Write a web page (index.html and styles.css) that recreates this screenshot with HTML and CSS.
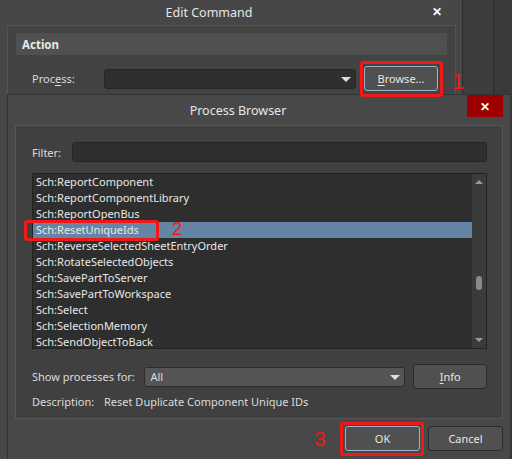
FILE: index.html
```html
<!DOCTYPE html>
<html>
<head>
  <title>Edit Command</title>
  <link rel="stylesheet" href="styles.css">
</head>
<body>
  <div class="desk">
    <!-- back window -->
    <div class="win edit-win">
      <div class="titlebar">
        <span class="title">Edit Command</span>
        <span class="close-plain">&#x2715;</span>
      </div>
      <div class="panel">
        <div class="section-head">Action</div>
        <div class="field-row">
          <span class="label">Proc<u>e</u>ss:</span>
          <div class="combo wide"><span class="caret"></span></div>
          <button class="btn focused"><u>B</u>rowse...</button>
        </div>
      </div>
    </div>
    <div class="side-strip"></div>

    <!-- front window -->
    <div class="win browser-win">
      <div class="titlebar">
        <span class="title">Process Browser</span>
        <span class="close-red">&#x2715;</span>
      </div>
      <div class="inner">
        <div class="filter-row">
          <span class="label">Filter:</span>
          <div class="input"></div>
        </div>
        <div class="list">
          <div class="items">
            <div class="item">Sch:ReportComponent</div>
            <div class="item">Sch:ReportComponentLibrary</div>
            <div class="item">Sch:ReportOpenBus</div>
            <div class="item selected">Sch:ResetUniqueIds</div>
            <div class="item">Sch:ReverseSelectedSheetEntryOrder</div>
            <div class="item">Sch:RotateSelectedObjects</div>
            <div class="item">Sch:SavePartToServer</div>
            <div class="item">Sch:SavePartToWorkspace</div>
            <div class="item">Sch:Select</div>
            <div class="item">Sch:SelectionMemory</div>
            <div class="item">Sch:SendObjectToBack</div>
          </div>
          <div class="scrollbar">
            <span class="arrow up"></span>
            <span class="thumb"></span>
            <span class="arrow down"></span>
          </div>
        </div>
        <div class="show-row">
          <span class="label">Show processes for:</span>
          <div class="combo all">All<span class="caret"></span></div>
          <button class="btn info"><u>I</u>nfo</button>
        </div>
        <div class="desc-row">
          <span class="label">Description:</span>
          <span class="desc">Reset Duplicate Component Unique IDs</span>
        </div>
      </div>
      <div class="footer">
        <button class="btn focused ok">OK</button>
        <button class="btn cancel">Cancel</button>
      </div>
    </div>

    <!-- step markers -->
    <div class="mark mark-browse"></div>
    <span class="step step1">1</span>
    <div class="mark mark-item"></div>
    <span class="step step2">2</span>
    <div class="mark mark-ok"></div>
    <span class="step step3">3</span>
  </div>
</body>
</html>
```

FILE: styles.css
```css
html, body {
  margin: 0;
  padding: 0;
  background: #3a3a3a;
  font-family: "Noto Sans", "Open Sans", sans-serif;
  font-size: 11px;
  color: #dcdcdc;
}
.desk {
  position: relative;
  width: 512px;
  height: 459px;
  overflow: hidden;
  background: #3a3a3a;
}
.win {
  position: absolute;
  box-sizing: border-box;
}
u {
  text-decoration: underline;
  text-underline-offset: 2px;
}

/* Edit Command window */
.edit-win {
  left: 0;
  top: 0;
  width: 463px;
  height: 459px;
  background: #474747;
  border-right: 1px solid #2e2e2e;
}
.edit-win .titlebar {
  height: 25px;
  display: flex;
  align-items: center;
  justify-content: center;
  position: relative;
  padding-right: 44px;
}
.title {
  font-size: 12.5px;
  color: #e6e6e6;
}
.close-plain {
  position: absolute;
  right: 20px;
  top: 3px;
  font-size: 12px;
  font-weight: bold;
  color: #fff;
}
.panel {
  margin: 0 6px 0 7px;
  border: 1px solid #535353;
  background: #434343;
  padding: 7px 8px;
  height: 440px;
  box-sizing: border-box;
}
.section-head {
  height: 22px;
  background: #505050;
  font-weight: bold;
  font-size: 11.5px;
  display: flex;
  align-items: center;
  padding-left: 6px;
  color: #e8e8e8;
}
.field-row {
  display: flex;
  align-items: center;
  margin-top: 11px;
  padding-left: 16px;
}
.field-row .label {
  width: 72px;
}
.combo {
  position: relative;
  box-sizing: border-box;
  height: 20px;
  background: #2f2f2f;
  border: 1px solid #262626;
  border-radius: 3px;
  display: flex;
  align-items: center;
  padding-left: 5px;
}
.combo.wide {
  width: 252px;
}
.caret {
  position: absolute;
  right: 4px;
  top: 7px;
  width: 0;
  height: 0;
  border-left: 5px solid transparent;
  border-right: 5px solid transparent;
  border-top: 5px solid #e0e0e0;
}
.btn {
  box-sizing: border-box;
  height: 25px;
  width: 74px;
  background: #505050;
  border: 1px solid #2a2a2a;
  border-radius: 3px;
  color: #e6e6e6;
  font: inherit;
  padding: 0;
}
.btn.focused {
  border-color: #9ab3c8;
}
.field-row .btn {
  margin-left: 8px;
}

.side-strip {
  position: absolute;
  left: 464px;
  top: 0;
  width: 29px;
  height: 459px;
  background: #3d3d3d;
  border-right: 1px solid #2a2a2a;
}

/* Process Browser window */
.browser-win {
  left: 7px;
  top: 94px;
  width: 504px;
  height: 365px;
  background: #484848;
  border: 1px solid #333;
  border-bottom: none;
}
.browser-win .titlebar {
  height: 30px;
  display: flex;
  align-items: center;
  justify-content: center;
  position: relative;
  padding-right: 42px;
}
.close-red {
  position: absolute;
  right: 7px;
  top: 0;
  width: 36px;
  height: 22px;
  background: #9c0000;
  color: #fff;
  font-weight: bold;
  font-size: 12px;
  display: flex;
  align-items: center;
  justify-content: center;
}
.inner {
  margin: 0 7px 0 7px;
  height: 294px;
  box-sizing: border-box;
  background: #404040;
  border: 1px solid #555;
  padding: 16px 15px 0 16px;
}
.filter-row {
  display: flex;
  align-items: center;
}
.filter-row .label {
  width: 40px;
}
.input {
  flex: 1;
  height: 20px;
  background: #2f2f2f;
  border: 1px solid #262626;
  border-radius: 3px;
  box-sizing: border-box;
}
.list {
  margin-top: 11px;
  height: 176px;
  box-sizing: border-box;
  border: 1px solid #222;
  background: #2e2e2e;
  display: flex;
}
.items {
  flex: 1;
}
.item {
  height: 16px;
  line-height: 16px;
  padding-left: 3px;
  color: #e8e8e8;
  white-space: nowrap;
}
.item.selected {
  background: #6486a4;
}
.scrollbar {
  position: relative;
  width: 14px;
  background: #3b3b3b;
}
.arrow {
  position: absolute;
  left: 3px;
  width: 0;
  height: 0;
  border-left: 4px solid transparent;
  border-right: 4px solid transparent;
}
.arrow.up {
  top: 6px;
  border-bottom: 4px solid #9a9a9a;
}
.arrow.down {
  bottom: 6px;
  border-top: 4px solid #9a9a9a;
}
.thumb {
  position: absolute;
  left: 4px;
  top: 102px;
  width: 6px;
  height: 14px;
  border-radius: 3px;
  background: #8a8a8a;
}
.show-row {
  display: flex;
  align-items: center;
  margin-top: 15px;
}
.show-row .label {
  width: 113px;
}
.combo.all {
  width: 262px;
  background: #555;
  border-color: #2c2c2c;
}
.btn.info {
  margin-left: 8px;
  height: 25px;
}
.desc-row {
  margin-top: 5px;
  display: flex;
}
.desc-row .label {
  width: 72px;
}
.footer {
  display: flex;
  justify-content: flex-end;
  gap: 8px;
  padding: 7px 7px 0 0;
}
.btn.ok, .btn.cancel {
  width: 75px;
  height: 25px;
}

/* red step markers */
.mark {
  position: absolute;
  border: 3px solid #f01818;
  border-radius: 3px;
  box-sizing: border-box;
}
.mark-browse { left: 360px; top: 61px; width: 83px; height: 36px; }
.mark-item { left: 24px; top: 220px; width: 135px; height: 21px; }
.mark-ok { left: 340px; top: 422px; width: 84px; height: 34px; }
.step {
  position: absolute;
  color: #f01818;
  font-family: "Liberation Sans", sans-serif;
  line-height: 1;
}
.step1 { left: 452px; top: 71px; font-size: 22px; }
.step2 { left: 172px; top: 220px; font-size: 18px; }
.step3 { left: 314px; top: 428px; font-size: 21px; }
```
